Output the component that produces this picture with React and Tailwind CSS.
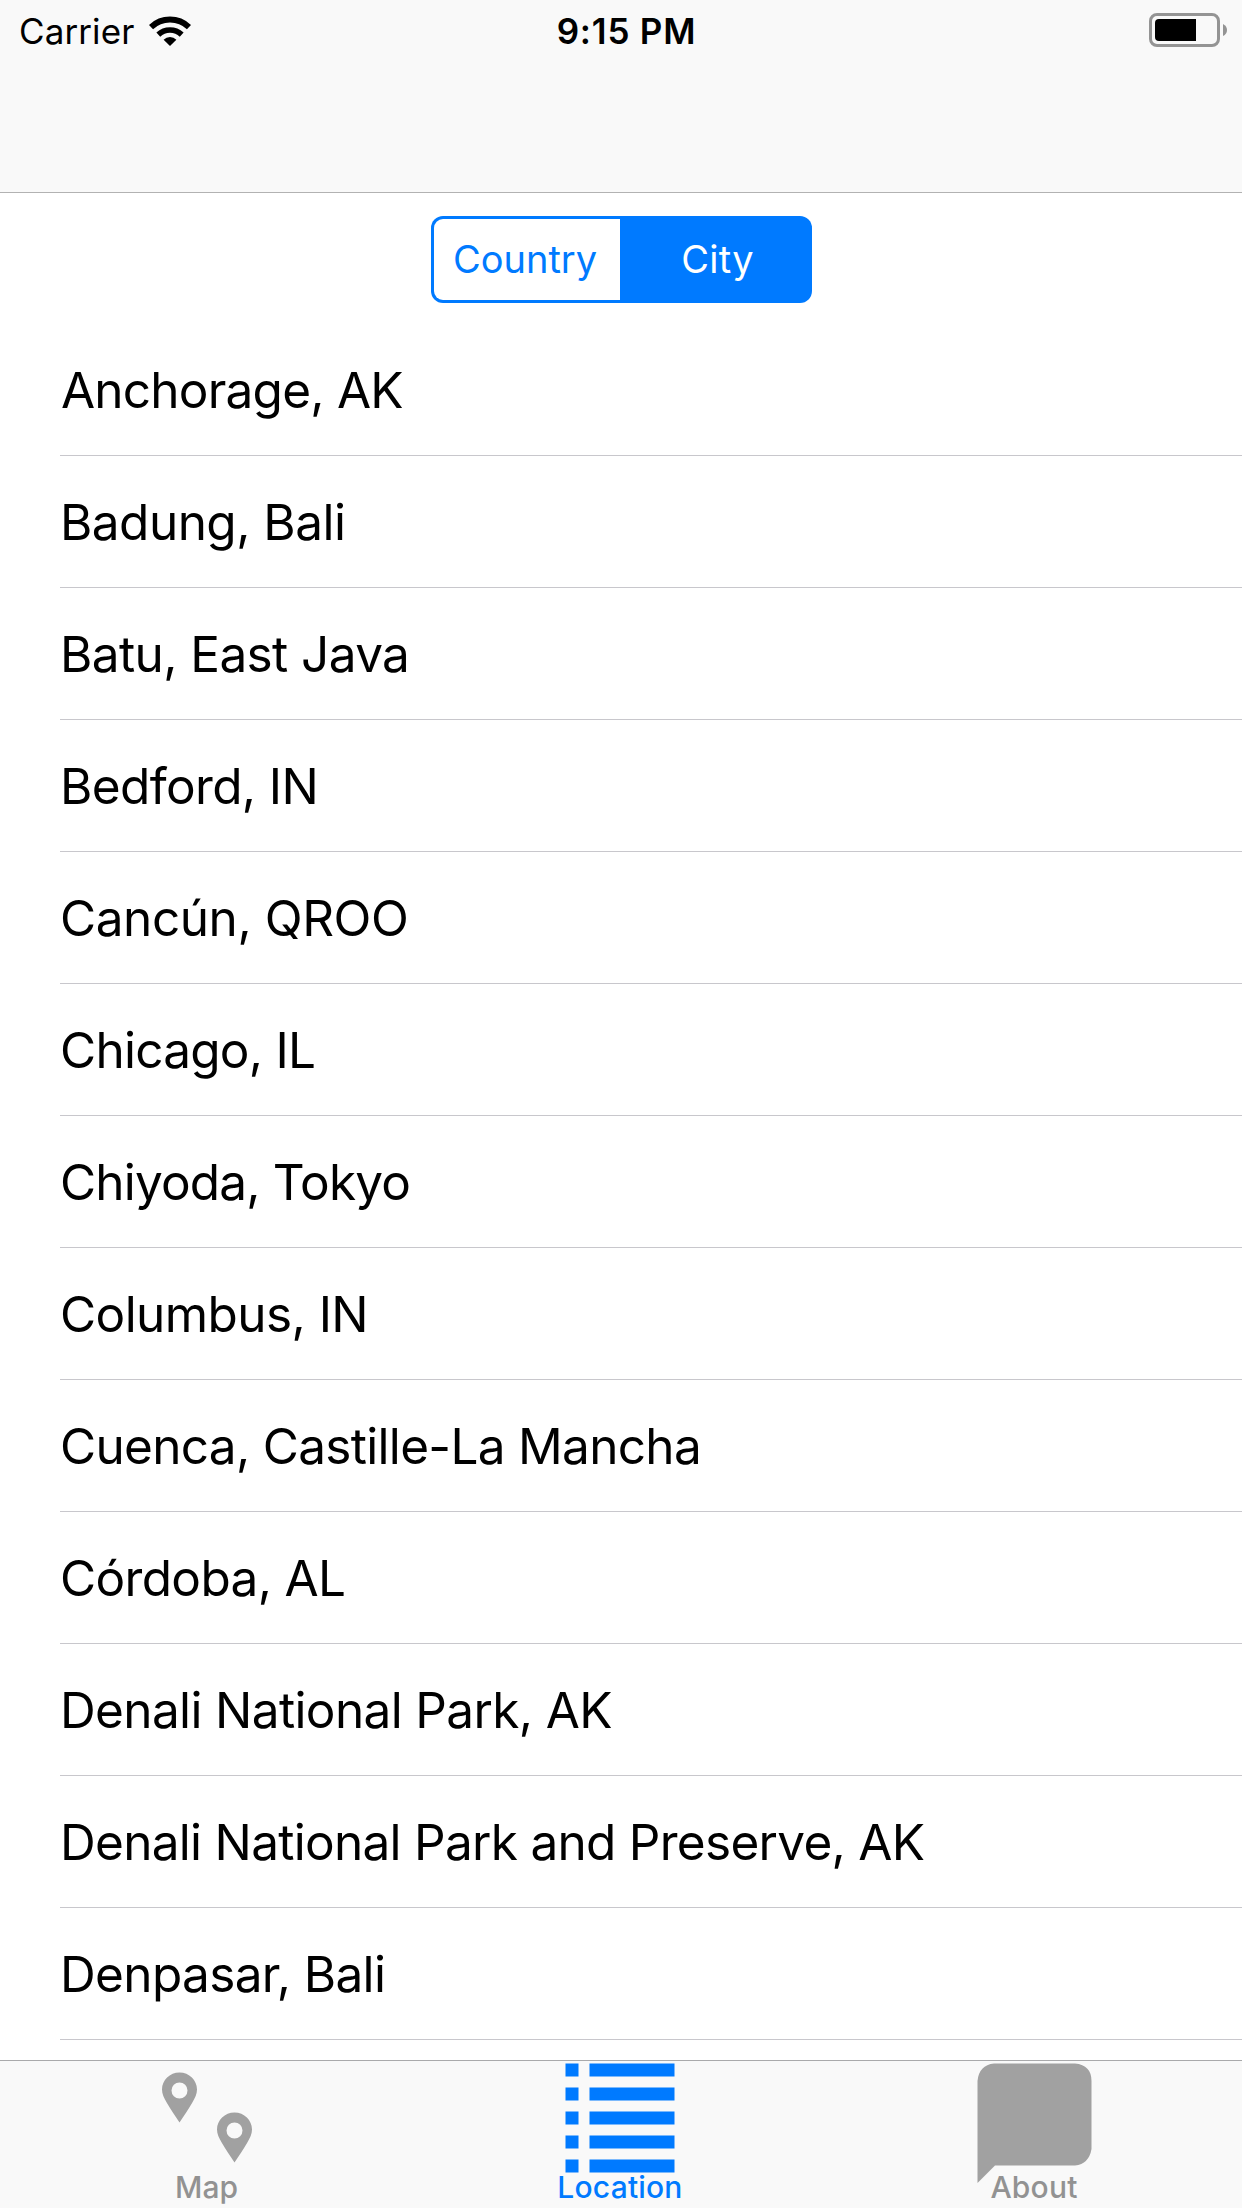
const cities = [
  ["Anchorage, AK", "tracking-[-0.78px] pl-px"],
  ["Badung, Bali", "tracking-[-0.53px]"],
  ["Batu, East Java", "tracking-[-0.6px]"],
  ["Bedford, IN", "tracking-[-0.63px]"],
  ["Cancún, QROO", "tracking-[-0.43px]"],
  ["Chicago, IL", "tracking-[-0.75px]"],
  ["Chiyoda, Tokyo", "tracking-[-0.82px]"],
  ["Columbus, IN", "tracking-[-0.57px]"],
  ["Cuenca, Castille-La Mancha", "tracking-[-0.69px]"],
  ["Córdoba, AL", "tracking-[-0.65px]"],
  ["Denali National Park, AK", "tracking-[-0.63px]"],
  ["Denali National Park and Preserve, AK", "tracking-[-0.71px]"],
  ["Denpasar, Bali", "tracking-[-0.64px]"],
];

function WifiIcon() {
  return (
    <svg className="ml-[15px] h-[30px] w-[42px]" viewBox="0 0 42 30" fill="none" stroke="#000">
      <path d="M2 11.2a27.5 27.5 0 0 1 38 0" strokeWidth="6" />
      <path d="M9.3 18.6a17 17 0 0 1 23.4 0" strokeWidth="5.6" />
      <path d="M21 30l-6.4-6.3a9.2 9.2 0 0 1 12.8 0z" fill="#000" stroke="none" />
    </svg>
  );
}

function BatteryIcon() {
  return (
    <svg className="mb-[2px] h-[34px] w-[78px]" viewBox="0 0 78 34">
      <rect x="1.5" y="1.5" width="68" height="31" rx="6.5" fill="none" stroke="#949494" strokeWidth="3" />
      <path d="M10 6H47V28H10Q6 28 6 24V10Q6 6 10 6Z" fill="#000" />
      <path d="M74 11q4 2 4 6t-4 6z" fill="#949494" />
    </svg>
  );
}

function MapIcon() {
  const pin =
    "M17.5 0C7.8 0 0 7.6 0 17c0 4.300 2 8.500 4.500 12.700C8.500 37 13.500 43.500 17.500 50C21.500 43.500 26.500 37 30.500 29.700C33 25.500 35 21.300 35 17C35 7.600 27.200 0 17.500 0Zm0 10a8 8 0 1 1 0 16a8 8 0 1 1 0-16Z";
  return (
    <svg className="h-[91px] w-[92px]" viewBox="0 0 92 91" fill="#a1a1a1" fillRule="evenodd">
      <path d={pin} transform="translate(1 .5)" />
      <path d={pin} transform="translate(56 40.500)" />
    </svg>
  );
}

function ListIcon() {
  return (
    <svg className="mr-[2px] h-[110px] w-[110px]" viewBox="0 0 110 110" fill="#007aff">
      {[0, 24, 48, 72, 96].map((y) => (
        <g key={y}>
          <rect x=".5" y={y + 0.5} width="13" height="13" />
          <rect x="24.500" y={y + 0.5} width="85" height="13" />
        </g>
      ))}
    </svg>
  );
}

function AboutIcon() {
  return (
    <svg className="mr-[2px] h-[121px] w-[115px] shrink-0" viewBox="0 0 115 121" fill="#a1a1a1">
      <path d="M17 .5H98Q114.500 2 114.500 18V86Q112 101 98 102.500H18L.5 120V18Q2 2 17 .5Z" />
    </svg>
  );
}

export default function App() {
  return (
    <div className="flex h-[2208px] w-[1242px] flex-col overflow-hidden bg-white font-['Inter',sans-serif] text-black">
      <header className="h-[193px] shrink-0 border-b border-[#b2b2b2] bg-[#f9f9f9]">
        <div className="grid h-[62px] grid-cols-3 items-center">
          <div className="flex items-center pl-[19px]">
            <span className="text-[35px] tracking-[0.1px]">Carrier</span>
            <WifiIcon />
          </div>
          <span className="pl-[11px] text-center text-[35px] font-semibold tracking-[0.8px]">9:15 PM</span>
          <div className="flex justify-end pr-[15px]">
            <BatteryIcon />
          </div>
        </div>
      </header>

      <main className="flex h-[1867px] shrink-0 flex-col overflow-hidden">
        <div className="flex h-[131px] shrink-0 justify-center pt-[23px]">
          <div className="flex h-[87px] w-[381px] rounded-[12px] bg-[#007aff] p-[3px] text-[38px]">
            <button className="w-[186px] rounded-l-[9px] bg-white pr-[3px] text-[#007aff]">Country</button>
            <button className="flex-1 pl-[7px] tracking-[0.3px] text-white">City</button>
          </div>
        </div>
        <ul className="pl-[60px]">
          {cities.map(([name, tracking]) => (
            <li key={name} className="flex h-[132px] items-center border-b border-[#c8c7cc] pt-[2px] text-[49.5px]">
              <span className={`whitespace-nowrap ${tracking}`}>{name}</span>
            </li>
          ))}
        </ul>
      </main>

      <nav className="grid h-[148px] shrink-0 grid-cols-3 border-t border-[#a9a9ab] bg-[#f9f9f9] text-[30px] font-medium leading-[34px] text-[#929292]">
        <div className="flex h-[147px] flex-col items-center">
          <div className="h-[109px] pt-[11px]"><MapIcon /></div>
          <span className="mr-px">Map</span>
        </div>
        <div className="flex h-[147px] flex-col items-center text-[#007aff]">
          <div className="h-[109px] pt-[2px]"><ListIcon /></div>
          <span className="mr-[2px] tracking-[0.2px]">Location</span>
        </div>
        <div className="flex h-[147px] flex-col items-center">
          <div className="h-[109px] pt-[2px]"><AboutIcon /></div>
          <span className="mr-[2px] tracking-[0.2px]">About</span>
        </div>
      </nav>
    </div>
  );
}
